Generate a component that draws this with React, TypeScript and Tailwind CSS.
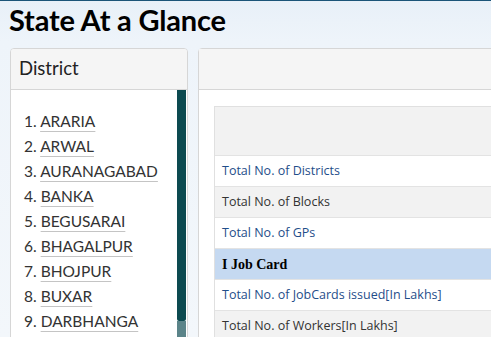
const districts = [
  'ARARIA',
  'ARWAL',
  'AURANAGABAD',
  'BANKA',
  'BEGUSARAI',
  'BHAGALPUR',
  'BHOJPUR',
  'BUXAR',
  'DARBHANGA',
]

type Row = { label: string; kind: 'link' | 'plain' | 'section'; shade: boolean }

const rows: Row[] = [
  { label: 'Total No. of Districts', kind: 'link', shade: false },
  { label: 'Total No. of Blocks', kind: 'plain', shade: true },
  { label: 'Total No. of GPs', kind: 'link', shade: false },
  { label: 'I Job Card', kind: 'section', shade: false },
  { label: 'Total No. of JobCards issued[In Lakhs]', kind: 'link', shade: false },
  { label: 'Total No. of Workers[In Lakhs]', kind: 'plain', shade: true },
]

function App() {
  return (
    <div
      className="w-[491px] h-[337px] overflow-hidden border-t border-[#1b5478] bg-[linear-gradient(180deg,#e8f0f8_0px,#eef4fa_40px,#f3f7fb_100%)]"
      style={{ fontFamily: '"Open Sans", "Noto Sans", sans-serif' }}
    >
      <h1
        className="pl-[9px] h-[47px] leading-[38px] text-[29px] font-bold text-black tracking-[-0.2px]"
        style={{ fontFamily: 'Lato, "Open Sans", sans-serif' }}
      >
        State At a Glance
      </h1>

      <div className="flex gap-[10px] pl-[10px]">
        {/* district list */}
        <div className="w-[178px] shrink-0 h-[300px] rounded-t-[4px] border border-[#d6d6d6] bg-white overflow-hidden">
          <div
            className="h-[41px] bg-[#f5f5f5] border-b border-[#d6d6d6] pl-[8px] flex items-center text-[18.5px] text-[#222]"
            style={{ fontFamily: 'Lato, sans-serif' }}
          >
            District
          </div>
          <div className="flex h-[260px]">
            <ol
              className="flex-1 pl-[13px] pt-[19px] text-[15.5px] text-[#333] leading-[25px]"
              style={{ fontFamily: 'Lato, sans-serif' }}
            >
              {districts.map((d, i) => (
                <li key={d} className="whitespace-nowrap">
                  {i + 1}.{' '}
                  <span className="underline decoration-[#c4c4c4] underline-offset-[4px]">{d}</span>
                </li>
              ))}
            </ol>
            <div className="w-[9px] flex flex-col mr-[1px]">
              <div className="h-[231px] bg-[#0c4a50] rounded-b-[2px]" />
              <div className="flex-1 bg-[#5b8489]" />
            </div>
          </div>
        </div>

        {/* stats panel */}
        <div className="flex-1 min-w-[400px] h-[300px] rounded-t-[4px] border border-[#d6d6d6] bg-white">
          <div className="h-[41px] bg-[#f5f5f5] border-b border-[#d6d6d6]" />
          <div className="pl-[15px] pt-[16px]">
            <div className="border-l border-t border-[#e0e0e0] text-[12.5px]">
              <div className="h-[49px] bg-[#f2f2f2] border-b border-[#e3e3e3]" />
              {rows.map((r) => (
                <div
                  key={r.label}
                  className={
                    'h-[31px] flex items-center pl-[7px] border-b border-[#e3e3e3] ' +
                    (r.kind === 'section'
                      ? 'bg-[#c5d9f1] font-bold text-black'
                      : r.shade
                        ? 'bg-[#f2f2f2] text-[#333]'
                        : 'bg-white text-[#1f4e8a]')
                  }
                  style={r.kind === 'section' ? { fontFamily: '"Liberation Serif", serif', fontSize: '14px' } : undefined}
                >
                  {r.label}
                </div>
              ))}
            </div>
          </div>
        </div>
      </div>
    </div>
  )
}

export default App
